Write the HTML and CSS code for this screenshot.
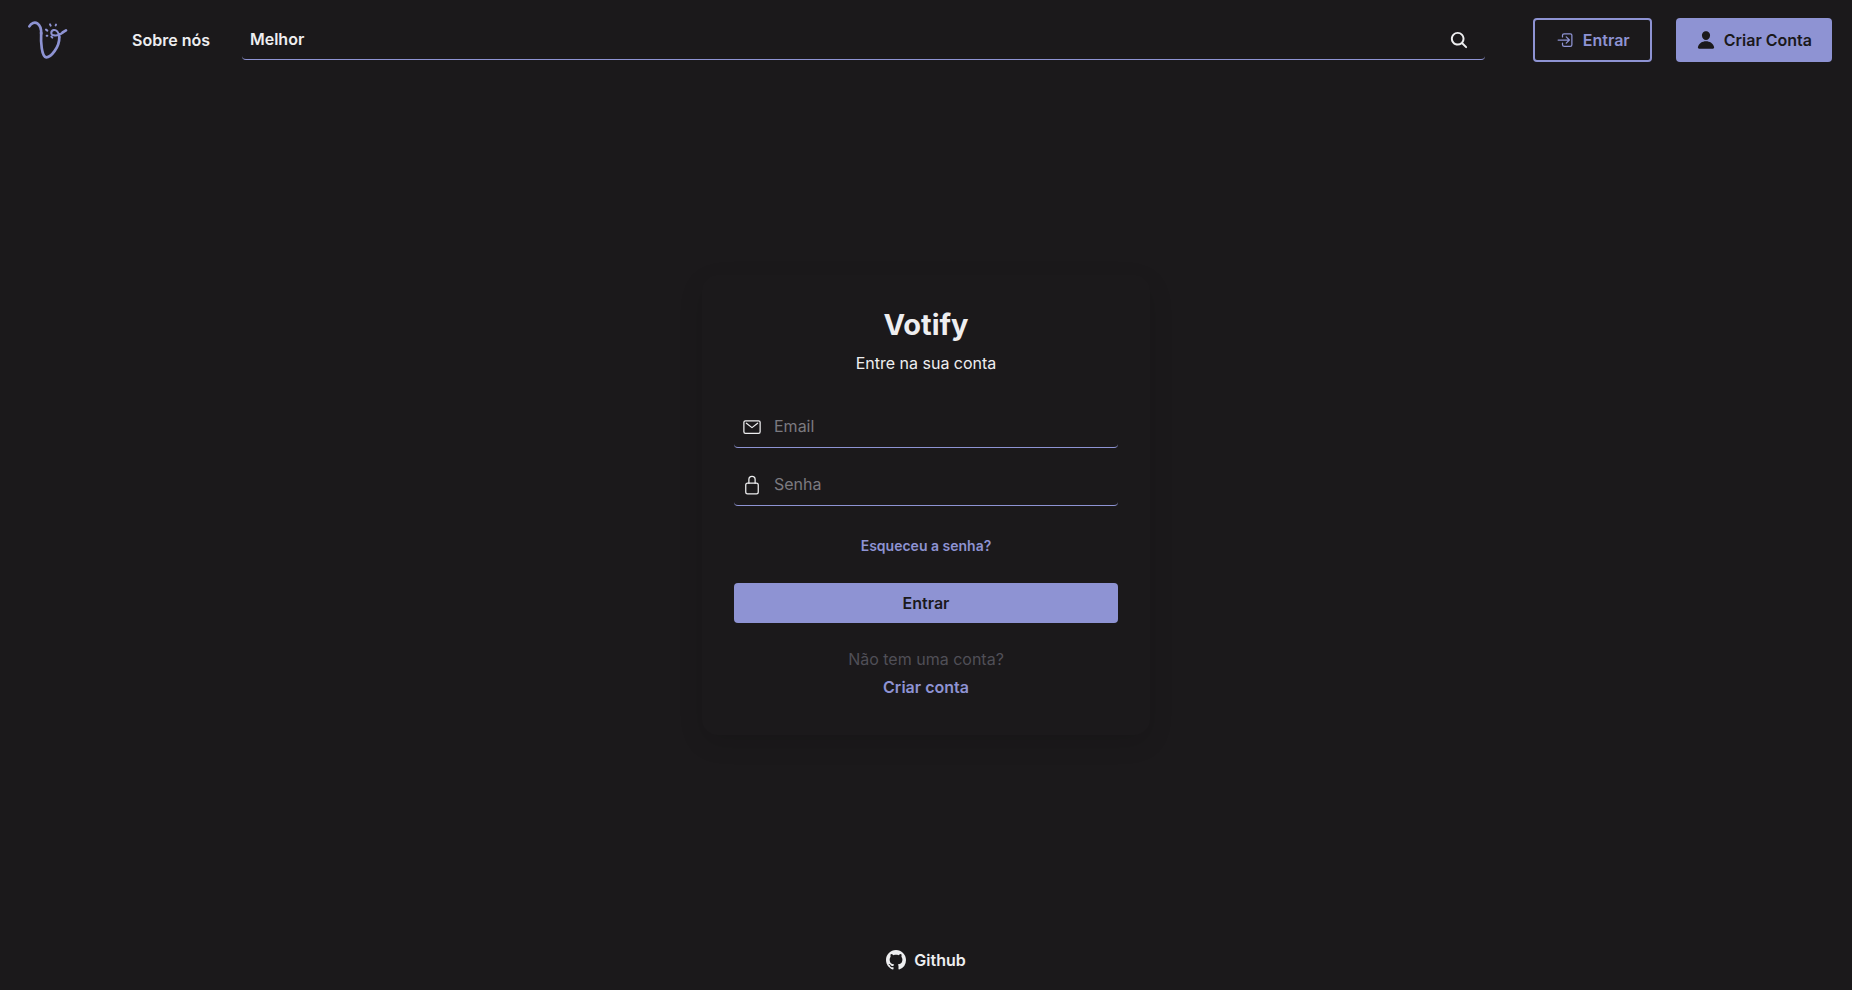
FILE: index.html
```html
<!DOCTYPE html>
<html lang="pt-BR">
<head>
<meta charset="utf-8">
<meta name="viewport" content="width=device-width, initial-scale=1">
<title>Votify</title>
<link rel="stylesheet" href="styles.css">
</head>
<body>
<header class="header">
  <a class="logo" href="#" aria-label="Votify">
    <svg viewBox="0 0 180 168" fill="none" stroke="currentColor" stroke-linecap="round" stroke-linejoin="round">
      <path stroke-width="8" d="M28 43C34 33 44 29 52 34C61 40 64 51 63.500 65"/>
      <path stroke-width="8" d="M63.500 62C62 92 65 132 78 136C92 137 119 106 118 74"/>
      <path stroke-width="6" d="M118 76C117 60 108 52 101 54C91 57 92 69 101 70C113 72 124 66 130 60"/>
      <path stroke-width="8" d="M128 61L138 55"/>
      <path stroke-width="6" d="M90 37L92 41M108 38L107 40M78 53L82 56M80 71L82 71M94 74L97 77"/>
    </svg>
  </a>
  <nav><a class="nav-link" href="#">Sobre nós</a></nav>
  <form class="search">
    <input class="search-input" type="text" value="Melhor" aria-label="Pesquisar">
    <button class="search-button" type="button" aria-label="Pesquisar">
      <svg class="icon" viewBox="0 0 512 512" fill="currentColor"><path d="M456.690 421.390L362.600 327.300a173.810 173.810 0 0 0 34.840-104.580C397.440 126.380 319.060 48 222.720 48S48 126.380 48 222.720s78.380 174.720 174.720 174.720A173.810 173.810 0 0 0 327.300 362.600l94.090 94.090a25 25 0 0 0 35.300-35.300zM97.920 222.720a124.800 124.800 0 1 1 124.800 124.800 124.950 124.950 0 0 1-124.800-124.800z"/></svg>
    </button>
  </form>
  <div class="actions">
    <button class="button button-outline" type="button">
      <svg class="icon" viewBox="0 0 512 512" fill="none" stroke="currentColor" stroke-width="32" stroke-linecap="round" stroke-linejoin="round"><path d="M192 176v-40a40 40 0 0 1 40-40h160a40 40 0 0 1 40 40v240a40 40 0 0 1-40 40H240c-22.090 0-48-17.910-48-40v-40M288 336l80-80-80-80M80 256h272"/></svg>
      Entrar
    </button>
    <button class="button button-solid" type="button">
      <svg class="icon" viewBox="0 0 512 512" fill="currentColor"><path d="M332.640 64.580C313.180 43.570 286 32 256 32c-30.160 0-57.430 11.500-76.800 32.380-19.580 21.110-29.120 49.800-26.880 80.780C156.760 206.280 203.270 256 256 256s99.160-49.710 103.670-110.820c2.270-30.700-7.330-59.330-27.030-80.600zM432 480H80A31 31 0 0 1 55.800 468.870c-6.500-7.770-9.120-18.380-7.180-29.110C57.060 392.940 83.400 353.610 124.800 326c36.780-24.510 83.370-38 131.200-38s94.420 13.500 131.200 38c41.400 27.600 67.740 66.930 76.180 113.750 1.940 10.730-.680 21.340-7.180 29.110A31 31 0 0 1 432 480z"/></svg>
      Criar Conta
    </button>
  </div>
</header>
<main class="main">
  <form class="card">
    <h1 class="title">Votify</h1>
    <p class="subtitle">Entre na sua conta</p>
    <div class="fields">
      <label class="field">
        <svg class="icon" viewBox="0 0 512 512" fill="none" stroke="currentColor" stroke-width="32" stroke-linecap="round" stroke-linejoin="round"><rect x="48" y="96" width="416" height="320" rx="40"/><path d="M112 160l144 112 144-112"/></svg>
        <input class="field-input" type="email" placeholder="Email" aria-label="Email">
      </label>
      <label class="field">
        <svg class="icon" viewBox="0 0 512 512" fill="none" stroke="currentColor" stroke-width="32" stroke-linecap="round" stroke-linejoin="round"><path d="M336 208v-95a80 80 0 0 0-160 0v95"/><rect x="96" y="208" width="320" height="272" rx="48"/></svg>
        <input class="field-input" type="password" placeholder="Senha" aria-label="Senha">
      </label>
    </div>
    <a class="link link-small" href="#">Esqueceu a senha?</a>
    <button class="submit" type="button">Entrar</button>
    <p class="hint">Não tem uma conta?</p>
    <a class="link" href="#">Criar conta</a>
  </form>
</main>
<footer class="footer">
  <a class="github" href="#">
    <svg class="icon" viewBox="0 0 16 16" fill="currentColor"><path d="M8 0C3.580 0 0 3.580 0 8c0 3.540 2.290 6.530 5.470 7.590.4.070.55-.17.55-.38 0-.19-.01-.82-.01-1.490-2.010.37-2.530-.49-2.690-.94-.09-.23-.48-.94-.82-1.130-.28-.15-.68-.52-.01-.53.63-.01 1.080.58 1.230.82.72 1.210 1.870.87 2.330.66.070-.52.28-.87.51-1.070-1.780-.2-3.640-.89-3.640-3.950 0-.87.31-1.590.82-2.150-.08-.2-.36-1.020.08-2.120 0 0 .67-.21 2.200.82.64-.18 1.320-.27 2-.27s1.360.09 2 .27c1.530-1.040 2.200-.82 2.200-.82.44 1.100.16 1.920.08 2.120.51.56.82 1.270.82 2.150 0 3.070-1.870 3.750-3.650 3.950.29.25.54.73.54 1.480 0 1.070-.01 1.930-.01 2.200 0 .21.15.46.55.38A8.010 8.010 0 0 0 16 8c0-4.420-3.580-8-8-8z"/></svg>
    Github
  </a>
</footer>
</body>
</html>
```
FILE: styles.css
```css
:root {
  --background: #1b191b;
  --primary: #8e93d3;
  --text: #eeeef0;
  --muted: #504f57;
  --placeholder: #7b7a80;
}

* {
  box-sizing: border-box;
}

body {
  min-height: 100vh;
  margin: 0;
  display: flex;
  flex-direction: column;
  background: var(--background);
  color: var(--text);
  font-family: Inter, "Liberation Sans", sans-serif;
  font-size: 16px;
  line-height: 24px;
}

a {
  color: inherit;
  text-decoration: none;
}

h1,
p {
  margin: 0;
}

button,
input {
  font: inherit;
  color: inherit;
}

button {
  cursor: pointer;
}

.icon {
  width: 20px;
  height: 20px;
  flex-shrink: 0;
}

.header {
  display: flex;
  align-items: center;
  height: 80px;
  padding: 0 20px;
}

.logo {
  width: 60px;
  height: 56px;
  margin-right: 52px;
  color: var(--primary);
}

.nav-link {
  font-weight: 600;
}

.search {
  display: flex;
  flex: 1;
  align-items: center;
  height: 40px;
  min-width: 0;
  margin: 0 48px 0 32px;
  padding: 0 16px 0 8px;
  border-bottom: 1px solid var(--primary);
  border-radius: 4px;
}

.search-input {
  flex: 1;
  min-width: 0;
  height: 36px;
  padding: 0 0 2px;
  border: 0;
  outline: 0;
  background: transparent;
  font-weight: 600;
}

.search-button {
  display: flex;
  padding: 0;
  border: 0;
  background: transparent;
}

.actions {
  display: flex;
  gap: 24px;
}

.button {
  display: flex;
  align-items: center;
  gap: 8px;
  height: 44px;
  padding: 0 20px;
  border-radius: 4px;
  font-weight: 600;
}

.button-outline {
  border: 2px solid var(--primary);
  background: transparent;
  color: var(--primary);
}

.button-solid {
  border: 0;
  background: var(--primary);
  color: var(--background);
}

.main {
  display: flex;
  flex: 1;
  align-items: center;
  justify-content: center;
}

.card {
  display: flex;
  flex-direction: column;
  align-items: center;
  width: 100%;
  max-width: 448px;
  padding: 32px 32px 36px;
  border-radius: 16px;
  box-shadow: 0 8px 24px rgba(0, 0, 0, 0.12);
}

.title {
  font-size: 29px;
  line-height: 36px;
  font-weight: 700;
}

.subtitle {
  margin-top: 8px;
}

.fields {
  display: flex;
  flex-direction: column;
  gap: 17px;
  width: 100%;
  margin-top: 32px;
}

.field {
  display: flex;
  align-items: center;
  gap: 12px;
  height: 41px;
  padding: 0 8px;
  border-bottom: 1px solid var(--primary);
  border-radius: 4px;
}

.field-input {
  flex: 1;
  min-width: 0;
  height: 40px;
  padding: 0 0 2px;
  border: 0;
  outline: 0;
  background: transparent;
}

.field-input::placeholder {
  color: var(--placeholder);
  opacity: 1;
}

.link {
  margin-top: 4px;
  color: var(--primary);
  font-weight: 600;
}

.link-small {
  margin-top: 28px;
  font-size: 14px;
}

.submit {
  width: 100%;
  height: 40px;
  margin-top: 25px;
  border: 0;
  border-radius: 4px;
  background: var(--primary);
  color: var(--background);
  font-weight: 600;
}

.hint {
  margin-top: 24px;
  color: var(--muted);
}

.footer {
  display: flex;
  align-items: center;
  justify-content: center;
  height: 60px;
}

.github {
  display: flex;
  align-items: center;
  gap: 8px;
  font-weight: 600;
}
```
